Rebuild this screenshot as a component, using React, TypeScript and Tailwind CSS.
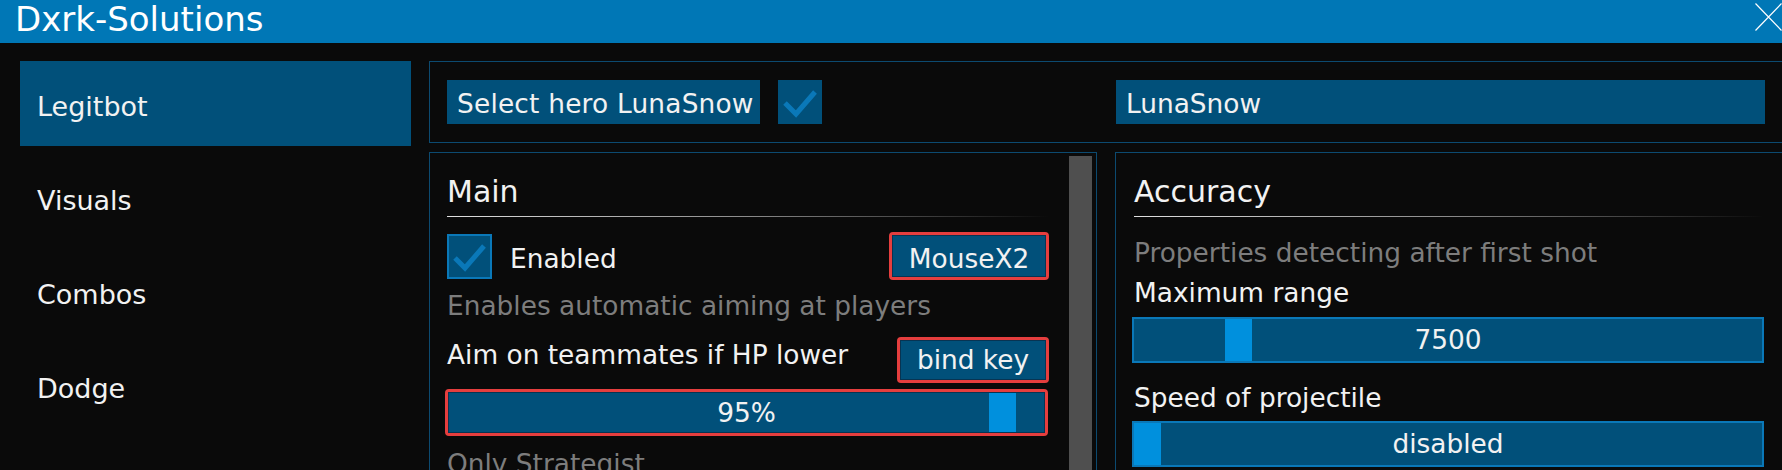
import React from "react";

const F = "font-['DejaVu_Sans',sans-serif]";

function TopCheck() {
  return (
    <svg width="44" height="44" viewBox="0 0 44 44">
      <path d="M7 23 L18 34 L37 12" fill="none" stroke="#0a78b8" strokeWidth="5" />
    </svg>
  );
}

function RedBox({ w, h, children }: { w: string; h: string; children: React.ReactNode }) {
  return (
    <div className={`${w} ${h} rounded-[4px] border-[3px] border-[#e53e3e]`}>
      <div className="flex h-full w-full items-center justify-center border border-[#073453] bg-[#01507a]">
        {children}
      </div>
    </div>
  );
}

function BlueSlider({ pos, label }: { pos: number; label: string }) {
  return (
    <div className="relative -ml-[2px] flex h-[46px] w-[632px] items-center justify-center border-2 border-[#0a78b8] bg-[#01507a]">
      <div className="absolute top-0 bottom-0 w-[27px] bg-[#0090dd]" style={{ left: Math.round(pos * (628 - 27)) }} />
      <span className="relative text-[26.4px] leading-[30px] text-[#f2f2f2]">{label}</span>
    </div>
  );
}

export default function App() {
  const side = ["Legitbot", "Visuals", "Combos", "Dodge", "Overlay"];
  return (
    <div className={`${F} h-[470px] w-[1782px] overflow-hidden bg-[#0a0a0a] text-[#f2f2f2]`}>
      {/* Title bar */}
      <div className="flex h-[43px] items-start bg-[#0077b6] pl-[15px]">
        <div className="text-[34px] leading-[38px] text-white">Dxrk-Solutions</div>
        <svg className="ml-auto mt-[3px]" width="27" height="28" viewBox="0 0 27 28">
          <path d="M0.5 0.5 L26.5 27.5 M26.5 0.5 L0.5 27.5" stroke="#ffffff" strokeWidth="1.2" fill="none" />
        </svg>
      </div>

      {/* Body */}
      <div className="flex gap-[18px] pl-[20px] pt-[18px]">
        {/* Sidebar */}
        <div className="flex w-[391px] shrink-0 flex-col gap-[9px]">
          {side.map((s, i) => (
            <div
              key={s}
              className={`flex h-[85px] shrink-0 items-center pl-[17px] pt-[6px] text-[27px] leading-[32px] ${
                i === 0 ? "bg-[#01507a]" : ""
              }`}
            >
              {s}
            </div>
          ))}
        </div>

        {/* Main column */}
        <div className="flex w-[1354px] shrink-0 flex-col gap-[9px]">
          {/* Top container */}
          <div className="flex h-[82px] items-center border border-[#0c4a70] px-[17px]">
            <div className="flex h-[44px] w-[313px] items-center bg-[#01507a] pl-[10px] pt-[3px] text-[26.4px] leading-[30px] tracking-[0.2px]">
              Select hero LunaSnow
            </div>
            <div className="ml-[18px] flex h-[44px] w-[44px] items-center justify-center bg-[#01507a]">
              <TopCheck />
            </div>
            <div className="ml-auto flex h-[44px] w-[649px] items-center bg-[#01507a] pl-[10px] pt-[3px] text-[26.4px] leading-[30px]">
              LunaSnow
            </div>
          </div>

          {/* Panels */}
          <div className="flex gap-[18px]">
            {/* Main panel */}
            <div className="flex h-[380px] w-[668px] shrink-0 border border-[#0c4a70]">
              <div className="flex w-[619px] flex-col pl-[17px] pt-[21px]">
                <div className="text-[30px] leading-[35px]">Main</div>
                <div className="mt-[7px] h-px w-[602px] bg-gradient-to-r from-[#e0e0e0] via-[#8a8a8a] to-transparent" />
                <div className="mt-[15px] flex h-[48px] items-center">
                  <div className="flex h-[45px] w-[45px] items-center justify-center border-2 border-[#0a78b8] bg-[#01507a]">
                    <svg width="41" height="41" viewBox="0 0 41 41">
                      <path d="M6 22 L16 32 L35 10" fill="none" stroke="#0a78b8" strokeWidth="5" />
                    </svg>
                  </div>
                  <span className="ml-[18px] pt-[6px] text-[26.4px] leading-[30px]">Enabled</span>
                  <div className="ml-auto">
                    <RedBox w="w-[160px]" h="h-[48px]">
                      <span className="pt-[6px] text-[26.4px] leading-[30px]">MouseX2</span>
                    </RedBox>
                  </div>
                </div>
                <div className="mt-[11px] text-[26.4px] leading-[30px] text-[#7d7d7d]">
                  Enables automatic aiming at players
                </div>
                <div className="mt-[16px] flex h-[46px] items-start">
                  <span className="pt-[3px] text-[26.4px] leading-[30px]">Aim on teammates if HP lower</span>
                  <div className="ml-auto">
                    <RedBox w="w-[152px]" h="h-[46px]">
                      <span className="text-[26.4px] leading-[30px]">bind key</span>
                    </RedBox>
                  </div>
                </div>
                <div className="-ml-[2px] mt-[6px] h-[47px] w-[603px] rounded-[4px] border-[3px] border-[#e53e3e]">
                  <div className="relative flex h-full w-full items-center justify-center border border-[#073453] bg-[#01507a]">
                    <div className="absolute top-0 bottom-0 w-[27px] bg-[#0090dd]" style={{ left: Math.round(0.95 * (595 - 27)) }} />
                    <span className="relative text-[26.4px] leading-[30px]">95%</span>
                  </div>
                </div>
                <div className="mt-[13px] text-[26.4px] leading-[30px] text-[#7d7d7d]">Only Strategist</div>
              </div>
              <div className="ml-[20px] mt-[3px] h-[370px] w-[23px] shrink-0 bg-[#4f4f4f]" />
            </div>

            {/* Accuracy panel */}
            <div className="flex h-[380px] w-[668px] shrink-0 flex-col border border-[#0c4a70] pl-[18px] pr-[18px] pt-[21px]">
              <div className="text-[30px] leading-[35px]">Accuracy</div>
              <div className="mt-[7px] h-px w-full bg-gradient-to-r from-[#e0e0e0] via-[#8a8a8a] to-transparent" />
              <div className="mt-[21px] text-[26.4px] leading-[30px] text-[#7d7d7d]">
                Properties detecting after first shot
              </div>
              <div className="mt-[10px] text-[26.4px] leading-[30px]">Maximum range</div>
              <div className="mt-[9px]">
                <BlueSlider pos={0.151} label="7500" />
              </div>
              <div className="mt-[20px] text-[26.4px] leading-[30px]">Speed of projectile</div>
              <div className="mt-[8px]">
                <BlueSlider pos={0} label="disabled" />
              </div>
            </div>
          </div>
        </div>
      </div>
    </div>
  );
}
